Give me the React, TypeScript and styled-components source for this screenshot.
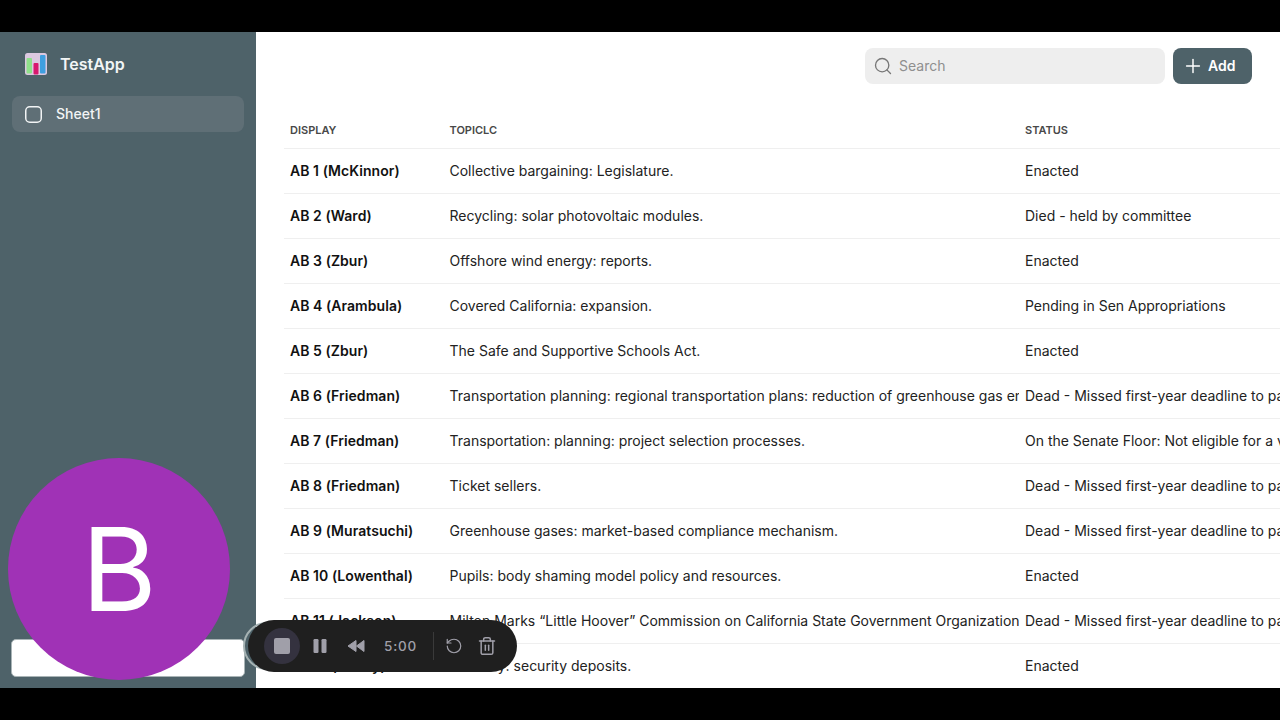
import React from 'react';
import styled, { createGlobalStyle } from 'styled-components';
import { Search, Plus, RotateCcw, Trash2 } from 'lucide-react';

const GlobalStyle = createGlobalStyle`
  html, body {
    margin: 0;
    padding: 0;
    width: 1280px;
    height: 720px;
    overflow: hidden;
    background: #000;
    font-family: Inter, "Liberation Sans", sans-serif;
  }
`;

const Page = styled.div`
  position: relative;
  width: 1280px;
  height: 720px;
  padding: 32px 0;
  box-sizing: border-box;
  background: #000;
  overflow: hidden;
`;

const Frame = styled.div`
  display: flex;
  height: 656px;
  background: #fff;
`;

const Sidebar = styled.aside`
  display: flex;
  flex-direction: column;
  flex: 0 0 256px;
  box-sizing: border-box;
  padding: 0 12px 11px 12px;
  background: #4e6269;
`;

const Brand = styled.div`
  display: flex;
  align-items: center;
  gap: 13px;
  height: 64px;
  padding-left: 13px;
  color: #f2f5f5;
  font-size: 16px;
  font-weight: 600;
`;

const NavItem = styled.div`
  display: flex;
  align-items: center;
  gap: 14px;
  height: 36px;
  box-sizing: border-box;
  padding: 0 0 1px 13px;
  border-radius: 8px;
  background: #5f6f76;
  color: #f2f4f5;
  font-size: 14px;
  font-weight: 500;

  svg {
    margin-top: 1px;
  }
`;

const UserBox = styled.div`
  height: 38px;
  margin: auto -1px 0;
  box-sizing: border-box;
  border: 1px solid #a9b4b6;
  border-radius: 5px;
  background: #fff;
`;

const Main = styled.main`
  flex: 1;
  min-width: 0;
  overflow: hidden;
`;

const TopBar = styled.div`
  display: flex;
  justify-content: flex-end;
  gap: 8px;
  padding: 16px 28px 0 0;
`;

const SearchBox = styled.div`
  display: flex;
  align-items: center;
  gap: 6px;
  width: 300px;
  height: 36px;
  box-sizing: border-box;
  padding: 0 0 1px 8px;
  border-radius: 8px;
  background: #eeeeee;
  color: #8f8f8f;
  font-size: 14px;
`;

const AddButton = styled.div`
  display: flex;
  align-items: center;
  gap: 4px;
  width: 79px;
  height: 36px;
  box-sizing: border-box;
  padding: 0 0 1px 9px;
  border-radius: 8px;
  background: #4e6269;
  color: #fff;
  font-size: 14px;
  font-weight: 600;
`;

const Table = styled.div`
  width: 1100px;
  margin: 28px 0 0 28px;
`;

const Row = styled.div<{ $head?: boolean }>`
  display: grid;
  grid-template-columns: 159.5px 575.5px 1fr;
  align-items: center;
  height: ${(p) => (p.$head ? '37px' : '45px')};
  box-sizing: border-box;
  padding-bottom: ${(p) => (p.$head ? '0' : '2px')};
  border-bottom: 1px solid #efefef;
`;

const HeadCell = styled.div`
  padding-left: 6px;
  color: #484848;
  font-size: 11px;
  font-weight: 600;
`;

const Cell = styled.div<{ $bold?: boolean }>`
  padding-left: 6px;
  overflow: hidden;
  white-space: nowrap;
  color: ${(p) => (p.$bold ? '#111' : '#222')};
  font-size: 14px;
  font-weight: ${(p) => (p.$bold ? 600 : 400)};
  letter-spacing: ${(p) => (p.$bold ? '0.05px' : '0')};
`;

const Avatar = styled.div`
  position: absolute;
  left: 8px;
  top: 458px;
  display: flex;
  align-items: center;
  justify-content: center;
  width: 222px;
  height: 222px;
  border-radius: 50%;
  background: #a032b6;
  color: #fff;
  font-size: 115px;
  font-weight: 400;
`;

const Halo = styled.div`
  position: absolute;
  left: 243px;
  top: 622px;
  width: 48px;
  height: 48px;
  box-sizing: border-box;
  border: 2px solid #a5b2b3;
  border-radius: 50%;
`;

const Recorder = styled.div`
  position: absolute;
  left: 248px;
  top: 620px;
  display: flex;
  align-items: center;
  width: 269px;
  height: 52px;
  box-sizing: border-box;
  padding-left: 16px;
  border-radius: 26px;
  background: #1f1f1f;
  color: #a09fa9;
`;

const StopButton = styled.div`
  display: flex;
  align-items: center;
  justify-content: center;
  width: 36px;
  height: 36px;
  border-radius: 50%;
  background: #34323f;

  &::after {
    content: '';
    width: 16px;
    height: 16px;
    border-radius: 2px;
    background: #a09fa9;
  }
`;

const Time = styled.span`
  width: 32px;
  margin-left: 19px;
  color: #a09fa9;
  font-size: 13.5px;
  font-weight: 500;
  letter-spacing: 0.8px;
`;

const Divider = styled.div`
  width: 1px;
  height: 28px;
  margin: 0 11px 0 17px;
  background: #3a3a3a;
`;

const Gap = styled.div<{ $w: number }>`
  flex: 0 0 ${(p) => p.$w}px;
`;

const DEAD = 'Dead - Missed first-year deadline to pass the house of origin';

const rows: [string, string, string][] = [
  ['AB 1 (McKinnor)', 'Collective bargaining: Legislature.', 'Enacted'],
  ['AB 2 (Ward)', 'Recycling: solar photovoltaic modules.', 'Died - held by committee'],
  ['AB 3 (Zbur)', 'Offshore wind energy: reports.', 'Enacted'],
  ['AB 4 (Arambula)', 'Covered California: expansion.', 'Pending in Sen Appropriations'],
  ['AB 5 (Zbur)', 'The Safe and Supportive Schools Act.', 'Enacted'],
  ['AB 6 (Friedman)', 'Transportation planning: regional transportation plans: reduction of greenhouse gas emissions.', DEAD],
  ['AB 7 (Friedman)', 'Transportation: planning: project selection processes.', 'On the Senate Floor: Not eligible for a vote'],
  ['AB 8 (Friedman)', 'Ticket sellers.', DEAD],
  ['AB 9 (Muratsuchi)', 'Greenhouse gases: market-based compliance mechanism.', DEAD],
  ['AB 10 (Lowenthal)', 'Pupils: body shaming model policy and resources.', 'Enacted'],
  ['AB 11 (Jackson)', 'Milton Marks “Little Hoover” Commission on California State Government Organization', DEAD],
  ['AB 12 (Haney)', 'Tenancy: security deposits.', 'Enacted'],
];

const Logo = () => (
  <svg width="22" height="22" viewBox="0 0 22 22">
    <rect width="22" height="22" rx="2.5" fill="#dcc8e0" />
    <rect x="1.500" y="5" width="5.500" height="15.500" rx="1" fill="#8fe08a" />
    <rect x="8.500" y="10" width="5" height="11.500" rx="1" fill="#d8186e" />
    <rect x="15" y="2" width="5.500" height="18.500" rx="1" fill="#3f9fe0" />
  </svg>
);

const SheetIcon = () => (
  <svg width="17" height="17" viewBox="0 0 17 17" fill="none" stroke="currentColor" strokeWidth="1.5">
    <rect x="0.750" y="0.750" width="15.500" height="15.500" rx="4" />
  </svg>
);

const PauseIcon = () => (
  <svg width="14" height="14" viewBox="0 0 14 14" fill="currentColor">
    <rect x="0.500" y="0" width="5" height="14" rx="1.2" />
    <rect x="8.500" y="0" width="5" height="14" rx="1.2" />
  </svg>
);

const RewindIcon = () => (
  <svg width="18" height="14" viewBox="0 0 18 14" fill="currentColor">
    <path d="M1 7 9 1.500V12.500z" stroke="currentColor" strokeLinejoin="round" />
    <path d="M9.500 7 17 1.500V12.500z" stroke="currentColor" strokeLinejoin="round" />
  </svg>
);

export default function App() {
  return (
    <Page>
      <GlobalStyle />
      <Frame>
        <Sidebar>
          <Brand>
            <Logo />
            TestApp
          </Brand>
          <NavItem>
            <SheetIcon />
            Sheet1
          </NavItem>
          <UserBox />
        </Sidebar>
        <Main>
          <TopBar>
            <SearchBox>
              <Search size={20} strokeWidth={1.6} color="#777" />
              Search
            </SearchBox>
            <AddButton>
              <Plus size={22} strokeWidth={1.6} />
              Add
            </AddButton>
          </TopBar>
          <Table>
            <Row $head>
              <HeadCell>DISPLAY</HeadCell>
              <HeadCell>TOPICLC</HeadCell>
              <HeadCell>STATUS</HeadCell>
            </Row>
            {rows.map(([display, topic, status]) => (
              <Row key={display}>
                <Cell $bold>{display}</Cell>
                <Cell>{topic}</Cell>
                <Cell>{status}</Cell>
              </Row>
            ))}
          </Table>
        </Main>
      </Frame>
      <Avatar>B</Avatar>
      <Halo />
      <Recorder>
        <StopButton />
        <Gap $w={13} />
        <PauseIcon />
        <Gap $w={20} />
        <RewindIcon />
        <Time>5:00</Time>
        <Divider />
        <RotateCcw size={18} strokeWidth={1.6} />
        <Gap $w={14} />
        <Trash2 size={20} strokeWidth={1.8} />
      </Recorder>
    </Page>
  );
}
